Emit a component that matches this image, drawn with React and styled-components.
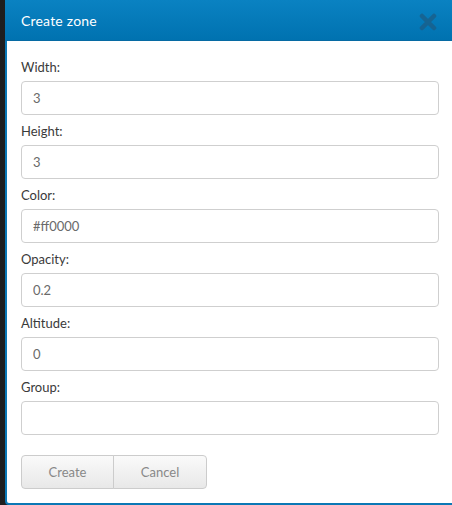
import React from "react"
import styled, { createGlobalStyle } from "styled-components"

const GlobalStyle = createGlobalStyle`
  html, body {
    margin: 0;
    padding: 0;
    background: #2b2b2b;
    font-family: Lato, "Open Sans", sans-serif;
  }
`

const Page = styled.div`
  width: 452px;
  height: 505px;
  padding-left: 5px;
  box-sizing: border-box;
  overflow: hidden;
  background: linear-gradient(90deg, #1e1e1e, #3a3a3a);
`

const Dialog = styled.div`
  width: 460px;
  height: 505px;
  box-sizing: border-box;
  background: #ffffff;
  border: 2px solid #0b78b5;
  border-top: none;
  border-radius: 0 0 4px 4px;
  display: flex;
  flex-direction: column;
`

const TitleBar = styled.div`
  height: 40px;
  flex-shrink: 0;
  margin: 0 -2px;
  padding: 0 16px;
  display: flex;
  align-items: center;
  justify-content: space-between;
  background: linear-gradient(180deg, #0a82c2 0%, #0072b0 100%);
  border-bottom: 1px solid #066aa3;
`

const Title = styled.span`
  color: #ffffff;
  font-size: 14px;
  letter-spacing: 0.2px;
`

const Close = styled.span`
  display: flex;
  margin-right: 12px;
  margin-top: 3px;
  opacity: 0.75;
`

const Body = styled.div`
  padding: 10px 14px 0 14px;
  display: flex;
  flex-direction: column;
`

const Label = styled.label`
  font-size: 13px;
  color: #3a3a3a;
  height: 30px;
  line-height: 32px;
  display: block;
`

const Input = styled.input`
  width: 418px;
  height: 34px;
  box-sizing: border-box;
  border: 1px solid #cfcfcf;
  border-radius: 4px;
  padding: 0 11px;
  font-family: inherit;
  font-size: 13px;
  color: #6a6a6a;
  outline: none;
  display: block;
`

const ButtonGroup = styled.div`
  display: flex;
  margin-top: 20px;
`

const Button = styled.button`
  width: ${(p) => p.$w}px;
  height: 34px;
  border: 1px solid #cccccc;
  background: linear-gradient(180deg, #fafafa 0%, #e8e8e8 100%);
  color: #888888;
  font-family: inherit;
  font-size: 13px;
  border-radius: ${(p) => (p.$first ? "4px 0 0 4px" : "0 4px 4px 0")};
  margin-left: ${(p) => (p.$first ? "0" : "-1px")};
  cursor: pointer;
`

const fields = [
  ["Width:", "3"],
  ["Height:", "3"],
  ["Color:", "#ff0000"],
  ["Opacity:", "0.2"],
  ["Altitude:", "0"],
  ["Group:", ""],
]

const App = () => {
  return (
    <>
      <GlobalStyle />
      <Page>
        <Dialog>
          <TitleBar>
            <Title>Create zone</Title>
            <Close>
              <svg width="18" height="18" viewBox="0 0 18 18">
                <path
                  d="M3 3 L15 15 M15 3 L3 15"
                  stroke="#1c5d86"
                  strokeWidth="4.5"
                  strokeLinecap="round"
                />
              </svg>
            </Close>
          </TitleBar>
          <Body>
            {fields.map(([label, value]) => (
              <div key={label}>
                <Label>{label}</Label>
                <Input defaultValue={value} />
              </div>
            ))}
            <ButtonGroup>
              <Button $first $w={93}>Create</Button>
              <Button $w={94}>Cancel</Button>
            </ButtonGroup>
          </Body>
        </Dialog>
      </Page>
    </>
  )
}

export default App
